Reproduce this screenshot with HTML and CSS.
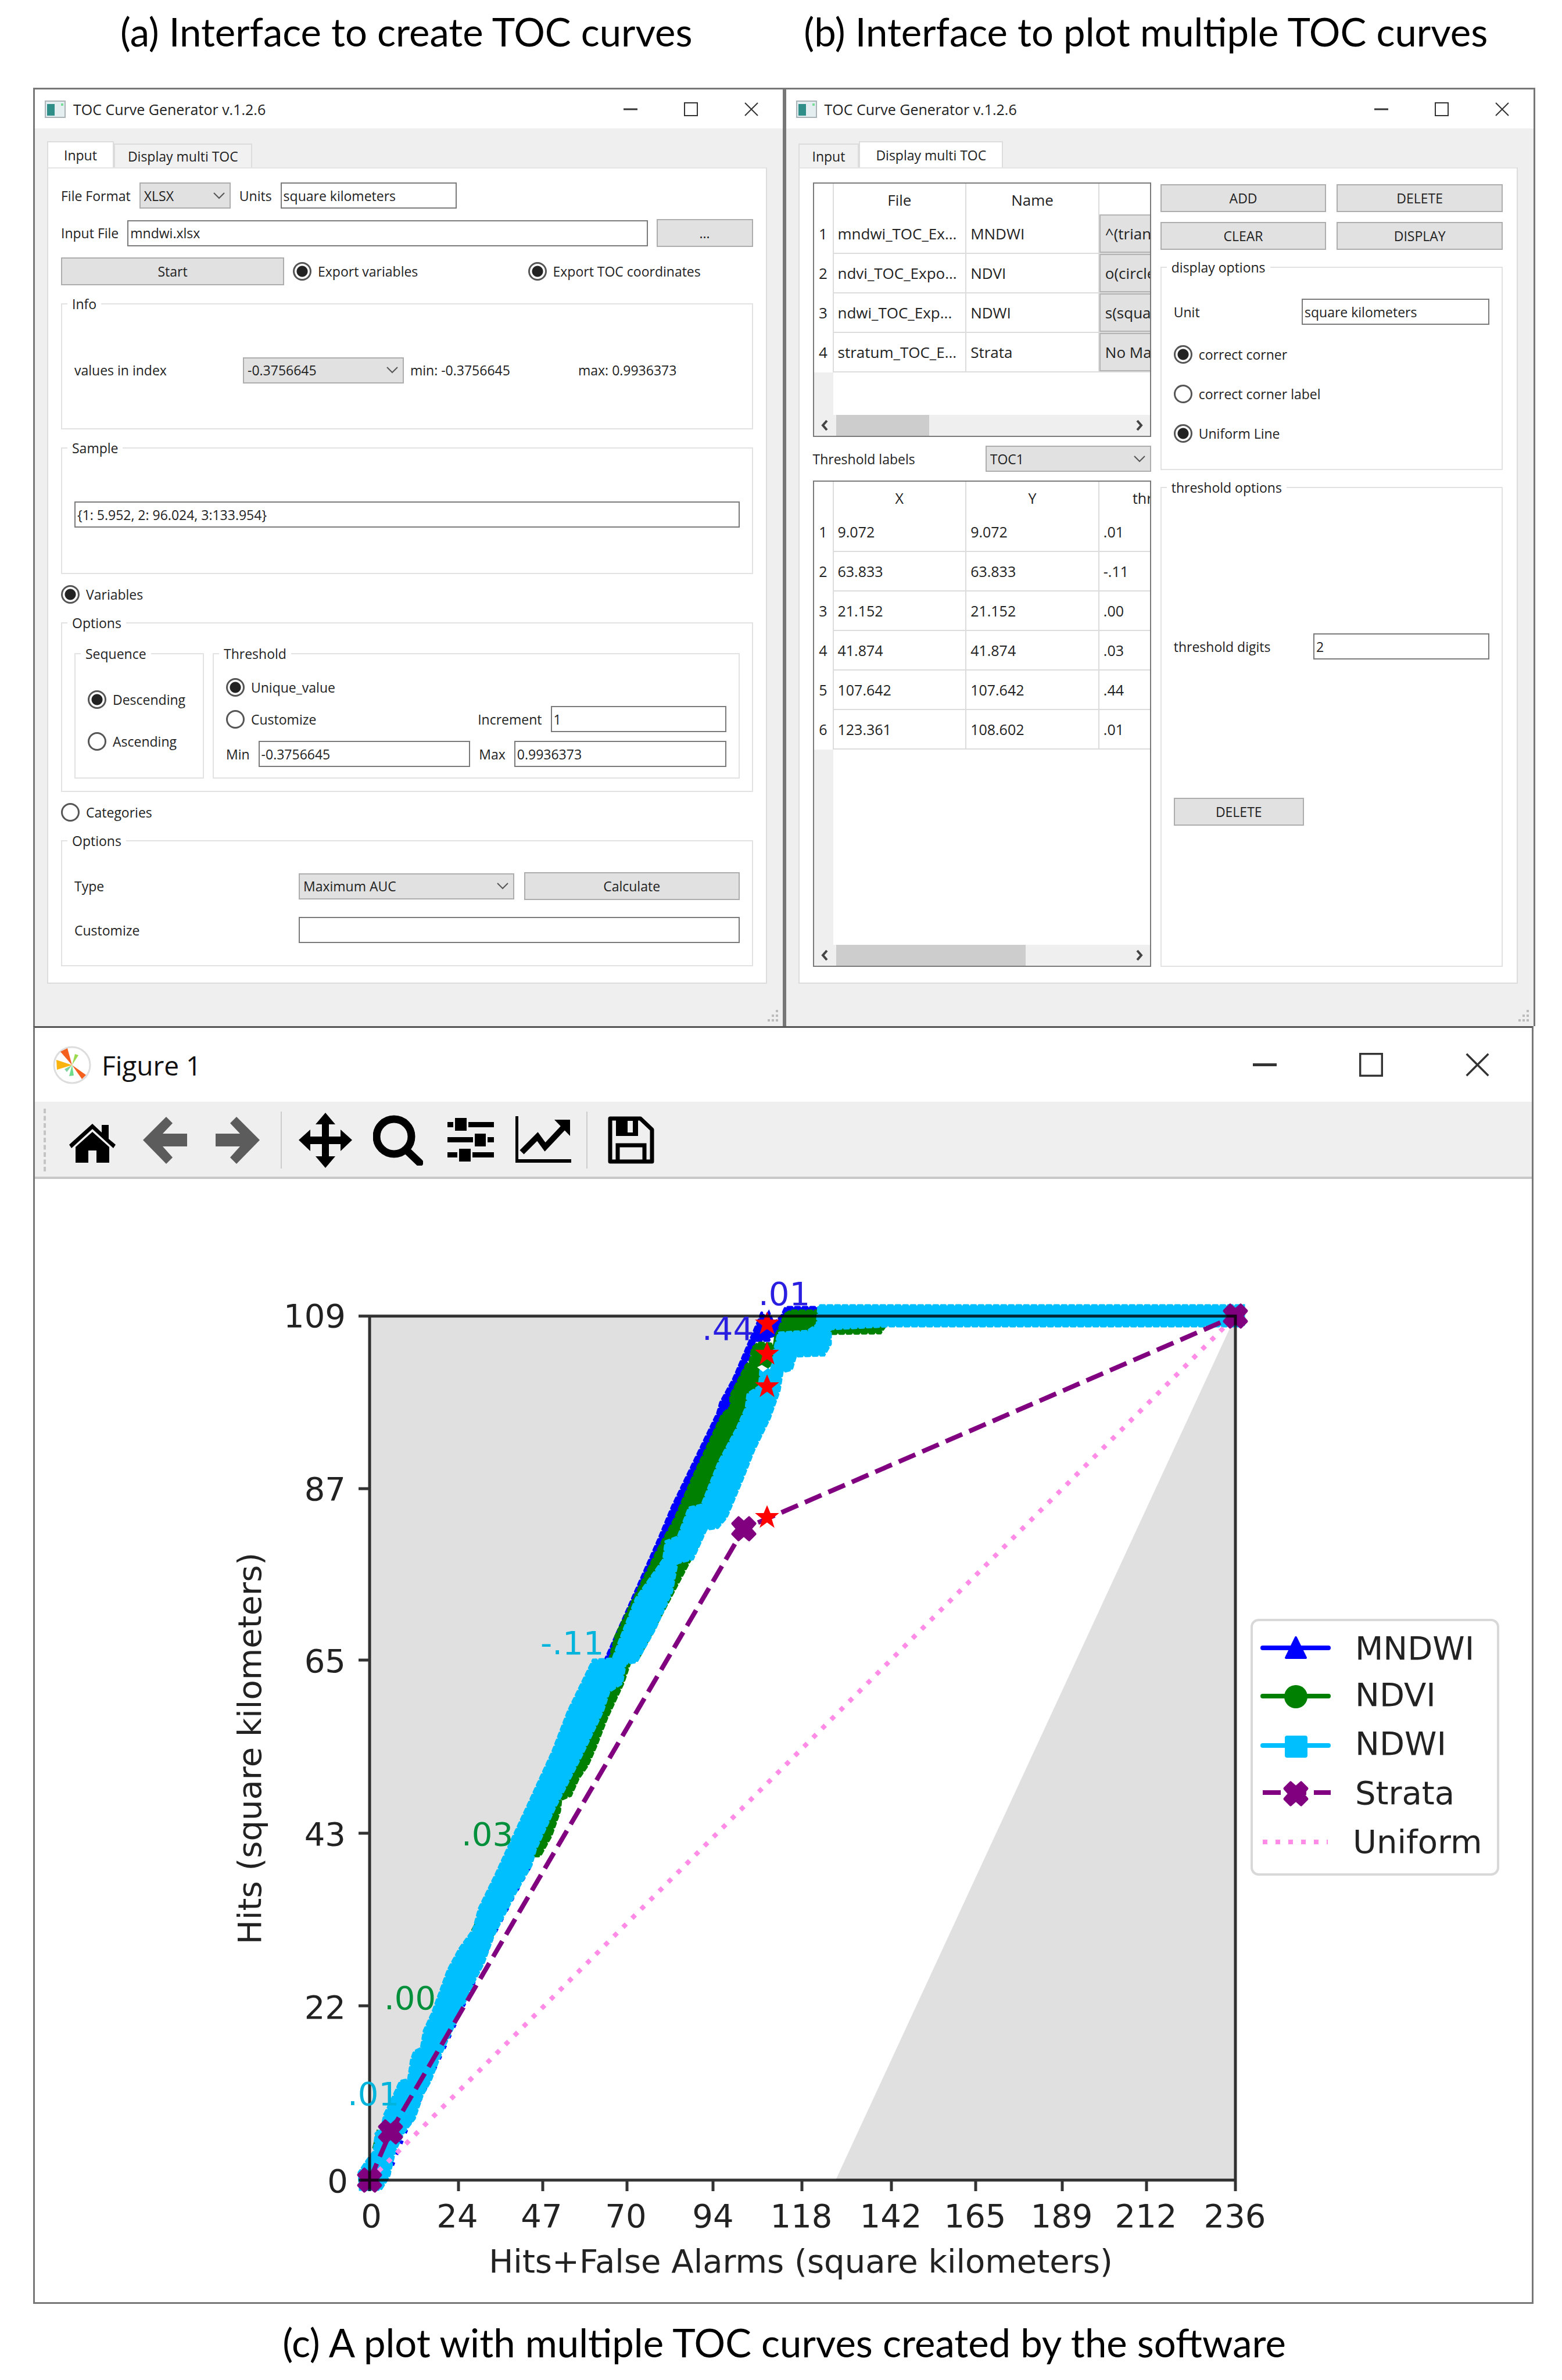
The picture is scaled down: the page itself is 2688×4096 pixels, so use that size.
FILE: index.html
```html
<!DOCTYPE html>
<html lang="en">
<head>
    <meta charset="UTF-8">
    <meta name="viewport" content="width=device-width, initial-scale=1.0">
    <title>TOC Curve Generator</title>
    <link rel="stylesheet" href="styles.css">
</head>
<body>
    <!-- shared icons -->
    <svg class="defs" width="0" height="0">
        <symbol id="app" viewBox="0 0 36 30"><rect x="1" y="1" width="34" height="28" fill="#e4eef0" stroke="#aab4b8" stroke-width="2"/><rect x="4" y="6" width="13" height="20" fill="#2f8f88"/><rect x="28" y="5" width="4" height="4" fill="#7d9"/></symbol>
        <symbol id="min" viewBox="0 0 24 24"><path d="M0 12H24" stroke="#333" stroke-width="3"/></symbol>
        <symbol id="max" viewBox="0 0 24 24"><rect x="1" y="1" width="22" height="22" fill="none" stroke="#333" stroke-width="2"/></symbol>
        <symbol id="close" viewBox="0 0 24 24"><path d="M1 1L23 23M23 1L1 23" stroke="#333" stroke-width="2"/></symbol>
        <symbol id="down" viewBox="0 0 20 12"><path d="M1 1L10 10L19 1" fill="none" stroke="#555" stroke-width="2"/></symbol>
        <symbol id="left" viewBox="0 0 12 20"><path d="M10 2L3 10L10 18" fill="none" stroke="#444" stroke-width="4"/></symbol>
        <symbol id="right" viewBox="0 0 12 20"><path d="M2 2L9 10L2 18" fill="none" stroke="#444" stroke-width="4"/></symbol>
        <symbol id="grip" viewBox="0 0 20 20"><path d="M14 0h4v4h-4zM14 8h4v4h-4zM14 16h4v4h-4zM7 8h4v4h-4zM7 16h4v4h-4zM0 16h4v4h-4z" fill="#bbb"/></symbol>
        <path id="cross" d="M-9 -19L0 -11L9 -19L19 -9L11 0L19 9L9 19L0 11L-9 19L-19 9L-11 0L-19 -9Z"/>
        <path id="star" d="M0 -18L5 -6L18 -6L7 3L11 16L0 8L-11 16L-7 3L-18 -6L-5 -6Z"/>
    </svg>

    <main class="page">
        <div class="windows">
            <h2 class="caption">(a) Interface to create TOC curves</h2>
            <h2 class="caption caption-b">(b) Interface to plot multiple TOC curves</h2>

            <section class="window">
                <header class="titlebar">
                    <svg class="app-icon"><use href="#app"/></svg>
                    <span class="title">TOC Curve Generator v.1.2.6</span>
                    <button class="win-btn" aria-label="Minimize"><svg><use href="#min"/></svg></button>
                    <button class="win-btn" aria-label="Maximize"><svg><use href="#max"/></svg></button>
                    <button class="win-btn" aria-label="Close"><svg><use href="#close"/></svg></button>
                </header>
                <nav class="tabs">
                    <button class="tab active">Input</button>
                    <button class="tab">Display multi TOC</button>
                </nav>
                <div class="panel form">
                    <div class="row">
                        <label for="format">File Format</label>
                        <span class="combo format"><select id="format"><option>XLSX</option></select><svg><use href="#down"/></svg></span>
                        <label for="units">Units</label>
                        <input class="text units" type="text" id="units" value="square kilometers">
                    </div>
                    <div class="row">
                        <label for="file">Input File</label>
                        <input class="text grow" type="text" id="file" value="mndwi.xlsx">
                        <button class="btn browse">...</button>
                    </div>
                    <div class="row export">
                        <button class="btn">Start</button>
                        <label class="radio"><input type="radio" name="exportVars" checked>Export variables</label>
                        <label class="radio"><input type="radio" name="exportToc" checked>Export TOC coordinates</label>
                    </div>
                    <fieldset class="group">
                        <legend>Info</legend>
                        <div class="info">
                            <label for="index">values in index</label>
                            <span class="combo"><select id="index"><option>-0.3756645</option></select><svg><use href="#down"/></svg></span>
                            <span>min: -0.3756645</span>
                            <span>max: 0.9936373</span>
                        </div>
                    </fieldset>
                    <fieldset class="group">
                        <legend>Sample</legend>
                        <div class="sample">
                            <input class="text grow" type="text" aria-label="Sample" value="{1: 5.952, 2: 96.024, 3:133.954}">
                        </div>
                    </fieldset>
                    <label class="radio"><input type="radio" name="kind" checked>Variables</label>
                    <fieldset class="group">
                        <legend>Options</legend>
                        <div class="options">
                            <fieldset class="group">
                                <legend>Sequence</legend>
                                <div class="sequence">
                                    <label class="radio"><input type="radio" name="seq" checked>Descending</label>
                                    <label class="radio"><input type="radio" name="seq">Ascending</label>
                                </div>
                            </fieldset>
                            <fieldset class="group">
                                <legend>Threshold</legend>
                                <div class="threshold">
                                    <label class="radio"><input type="radio" name="thr" checked>Unique_value</label>
                                    <div class="row">
                                        <label class="radio grow"><input type="radio" name="thr">Customize</label>
                                        <label for="inc">Increment</label>
                                        <input class="text increment" type="text" id="inc" value="1">
                                    </div>
                                    <div class="row">
                                        <label for="tmin">Min</label>
                                        <input class="text grow" type="text" id="tmin" value="-0.3756645">
                                        <label for="tmax">Max</label>
                                        <input class="text grow" type="text" id="tmax" value="0.9936373">
                                    </div>
                                </div>
                            </fieldset>
                        </div>
                    </fieldset>
                    <label class="radio"><input type="radio" name="kind">Categories</label>
                    <fieldset class="group">
                        <legend>Options</legend>
                        <div class="categories">
                            <label for="type">Type</label>
                            <span class="combo"><select id="type"><option>Maximum AUC</option></select><svg><use href="#down"/></svg></span>
                            <button class="btn">Calculate</button>
                            <label for="custom">Customize</label>
                            <input class="text wide" type="text" id="custom">
                        </div>
                    </fieldset>
                </div>
                <footer class="status"><svg><use href="#grip"/></svg></footer>
            </section>

            <section class="window">
                <header class="titlebar">
                    <svg class="app-icon"><use href="#app"/></svg>
                    <span class="title">TOC Curve Generator v.1.2.6</span>
                    <button class="win-btn" aria-label="Minimize"><svg><use href="#min"/></svg></button>
                    <button class="win-btn" aria-label="Maximize"><svg><use href="#max"/></svg></button>
                    <button class="win-btn" aria-label="Close"><svg><use href="#close"/></svg></button>
                </header>
                <nav class="tabs">
                    <button class="tab">Input</button>
                    <button class="tab active">Display multi TOC</button>
                </nav>
                <div class="panel display">
                    <div class="left">
                        <div class="sheet files">
                            <div class="view">
                                <table>
                                    <colgroup><col class="num"><col><col><col></colgroup>
                                    <thead><tr><th></th><th>File</th><th>Name</th><th></th></tr></thead>
                                    <tbody>
                                        <tr><th>1</th><td>mndwi_TOC_Ex...</td><td>MNDWI</td><td class="pick"><select aria-label="Marker 1"><option>^(triangle)</option></select></td></tr>
                                        <tr><th>2</th><td>ndvi_TOC_Expo...</td><td>NDVI</td><td class="pick"><select aria-label="Marker 2"><option>o(circle)</option></select></td></tr>
                                        <tr><th>3</th><td>ndwi_TOC_Exp...</td><td>NDWI</td><td class="pick"><select aria-label="Marker 3"><option>s(square)</option></select></td></tr>
                                        <tr><th>4</th><td>stratum_TOC_E...</td><td>Strata</td><td class="pick"><select aria-label="Marker 4"><option>No Marker</option></select></td></tr>
                                    </tbody>
                                </table>
                                <div class="gutter"></div>
                            </div>
                            <div class="scroll"><svg><use href="#left"/></svg><div class="track"><div class="thumb" style="width: 32%"></div></div><svg><use href="#right"/></svg></div>
                        </div>
                        <div class="row labels">
                            <label for="toc">Threshold labels</label>
                            <span class="combo toc"><select id="toc"><option>TOC1</option></select><svg><use href="#down"/></svg></span>
                        </div>
                        <div class="sheet grow">
                            <div class="view">
                                <table>
                                    <colgroup><col class="num"><col><col><col></colgroup>
                                    <thead><tr><th></th><th>X</th><th>Y</th><th>threshold</th></tr></thead>
                                    <tbody>
                                        <tr><th>1</th><td>9.072</td><td>9.072</td><td>.01</td></tr>
                                        <tr><th>2</th><td>63.833</td><td>63.833</td><td>-.11</td></tr>
                                        <tr><th>3</th><td>21.152</td><td>21.152</td><td>.00</td></tr>
                                        <tr><th>4</th><td>41.874</td><td>41.874</td><td>.03</td></tr>
                                        <tr><th>5</th><td>107.642</td><td>107.642</td><td>.44</td></tr>
                                        <tr><th>6</th><td>123.361</td><td>108.602</td><td>.01</td></tr>
                                    </tbody>
                                </table>
                                <div class="gutter"></div>
                            </div>
                            <div class="scroll"><svg><use href="#left"/></svg><div class="track"><div class="thumb" style="width: 65%"></div></div><svg><use href="#right"/></svg></div>
                        </div>
                    </div>
                    <div class="right">
                        <div class="actions">
                            <button class="btn">ADD</button>
                            <button class="btn">DELETE</button>
                            <button class="btn">CLEAR</button>
                            <button class="btn">DISPLAY</button>
                        </div>
                        <fieldset class="group">
                            <legend>display options</legend>
                            <div class="display-options">
                                <div class="row spread">
                                    <label for="unit">Unit</label>
                                    <input class="text unit" type="text" id="unit" value="square kilometers">
                                </div>
                                <label class="radio"><input type="radio" name="corner" checked>correct corner</label>
                                <label class="radio"><input type="radio" name="cornerLabel">correct corner label</label>
                                <label class="radio"><input type="radio" name="uniform" checked>Uniform Line</label>
                            </div>
                        </fieldset>
                        <fieldset class="group grow">
                            <legend>threshold options</legend>
                            <div class="threshold-options">
                                <div class="row spread">
                                    <label for="digits">threshold digits</label>
                                    <input class="text digits" type="text" id="digits" value="2">
                                </div>
                                <button class="btn remove">DELETE</button>
                            </div>
                        </fieldset>
                    </div>
                </div>
                <footer class="status"><svg><use href="#grip"/></svg></footer>
            </section>
        </div>

        <section class="figure">
            <header class="titlebar">
                <svg class="mpl" viewBox="0 0 66 66">
                    <circle cx="33" cy="33" r="31" fill="#fff" stroke="#ddd" stroke-width="3"/>
                    <path d="M33 33L13 10L25 4Z" fill="#f4601d"/>
                    <path d="M33 33L57 50L50 57Z" fill="#f4601d"/>
                    <path d="M33 33L6 24L7 41Z" fill="#fbb40f"/>
                    <path d="M33 33L38 14L44 16Z" fill="#9bd94e"/>
                    <path d="M33 33L28 52L36 51Z" fill="#6fdc8c"/>
                    <path d="M33 33L20 40L24 45Z" fill="#7fd4a0"/>
                </svg>
                <span class="title">Figure 1</span>
                <button class="win-btn" aria-label="Minimize"><svg><use href="#min"/></svg></button>
                <button class="win-btn" aria-label="Maximize"><svg><use href="#max"/></svg></button>
                <button class="win-btn" aria-label="Close"><svg><use href="#close"/></svg></button>
            </header>
            <div class="toolbar">
                <span class="handle"></span>
                <button class="home" aria-label="Home"><svg width="80" height="67" viewBox="0 0 80 67"><path d="M0 36L40 0L56 15V2H68V26L80 36L76 42L40 9L4 42Z"/><path d="M40 14L69 40V67H47V46H33V67H11V40Z"/></svg></button>
                <button class="off" aria-label="Back"><svg width="76" height="81" viewBox="0 0 76 81"><path d="M0 40L40 0L51 11L34 29H76V51H34L51 70L40 81Z"/></svg></button>
                <button class="off" aria-label="Forward"><svg width="76" height="81" viewBox="0 0 76 81"><path d="M76 40L36 0L25 11L42 29H0V51H42L25 70L36 81Z"/></svg></button>
                <span class="sep"></span>
                <button aria-label="Pan"><svg width="92" height="95" viewBox="0 0 92 95"><path d="M46 0L63 20H52V41H72V29L92 47L72 66V54H52V75H63L46 95L29 75H40V54H20V66L0 47L20 29V41H40V20H29Z"/></svg></button>
                <button aria-label="Zoom"><svg width="86" height="88" viewBox="0 0 86 88"><circle cx="36" cy="38" r="30" fill="none" stroke="#000" stroke-width="13"/><path d="M57 61L80 83" stroke="#000" stroke-width="13" stroke-linecap="round"/></svg></button>
                <button aria-label="Subplots"><svg width="80" height="76" viewBox="0 0 80 76"><path d="M0 7H10V16H0ZM13 0H33V22H13ZM36 7H80V16H36ZM0 33H44V42H0ZM47 27H66V49H47ZM69 33H80V42H69ZM0 59H17V68H0ZM20 53H40V75H20ZM43 59H80V68H43Z"/></svg></button>
                <button aria-label="Customize"><svg width="96" height="82" viewBox="0 0 96 82"><path d="M2 0V77H96" fill="none" stroke="#000" stroke-width="6"/><path d="M11 62L38 35L51 53L82 20" fill="none" stroke="#000" stroke-width="10"/><path d="M67 6H94V34Z"/></svg></button>
                <span class="sep"></span>
                <button aria-label="Save"><svg width="80" height="82" viewBox="0 0 80 82"><path d="M4 4H56L76 23V78H4Z" fill="none" stroke="#000" stroke-width="7" stroke-linejoin="round"/><path fill-rule="evenodd" d="M14 4H52V34H14ZM34 8V28H43V8Z"/><path d="M17 78V50H63V78" fill="none" stroke="#000" stroke-width="7"/></svg></button>
            </div>

            <svg class="plot" viewBox="61 2026 2576 1933" role="img" aria-label="TOC curves">
                <!-- unreachable area -->
                <path class="shade" d="M637 2262H1325L637 3749ZM2127 2262V3749H1439Z"/>

                <!-- MNDWI -->
                <path class="mndwi bumpy" d="M1042 2855L1135 2645L1158 2590L1236 2429L1241 2411L1263 2371L1306 2271L1312 2256L1318 2266L1324 2256L1332 2275L1346 2262L1353 2247H1407V2290H1341L1327 2304H1300L1250 2440L1070 2853Z"/>
                <path class="fringe" d="M668 3742L696 3670L726 3604L756 3540L814 3412L847 3332L885 3258L915 3204"/>
                <!-- NDVI -->
                <path class="ndvi bumpy" d="M1050 2853L1061 2812L1134 2663L1162 2612L1193 2541L1244 2432L1259 2418L1258 2400L1285 2347L1292 2340L1296 2317L1306 2308L1328 2310L1341 2286L1352 2259L1362 2253H1407L1527 2275L1516 2291L1430 2292L1380 2300L1310 2360L1300 2400L1200 2660L1100 2850Z"/>
                <path class="ndvi bumpy" d="M1060 2850L1085 2858L1073 2894L1045 2954L1026 3003L1012 3035L996 3058L983 3087L966 3094L964 3114L949 3157L930 3191L922 3191L880 3174Z"/>
                <path class="ndvi" d="M812 3319L824 3296V3320ZM727 3520L742 3480V3520ZM642 3694L650 3662L660 3690ZM846 3338L858 3312L840 3320Z"/>
                <!-- NDWI -->
                <path class="ndwi bumpy" d="M621 3765L619 3736L633 3715L645 3700L648 3669L658 3660L663 3636L673 3616L690 3579L704 3576L709 3542L714 3528L726 3522L731 3492L745 3462L772 3388L792 3351L816 3318L826 3281L854 3224L877 3174L905 3114L952 3012L979 2942L1022 2854L1056 2852L1065 2827L1096 2748L1143 2681L1147 2650L1168 2642L1187 2592L1209 2587L1238 2514L1269 2456L1285 2420L1288 2396L1308 2383L1310 2356L1329 2353L1333 2323L1341 2291L1391 2288L1407 2277L1410 2244H2141V2279H1530L1430 2284V2310L1419 2329L1370 2331L1363 2354L1347 2358L1342 2390L1325 2438L1298 2493L1279 2541L1251 2608L1236 2626L1216 2629L1193 2680L1166 2687L1157 2736L1127 2802L1096 2857L1077 2860L1071 2894L1049 2908L1038 2942L1003 3015L972 3076L956 3107L922 3181L915 3207L888 3254L850 3328L833 3375L816 3408L779 3489L758 3535L741 3579L728 3602L714 3643L694 3669L680 3700L670 3743L656 3765Z"/>
                <path fill="#fff" d="M1304 2350L1312 2346L1322 2352L1314 2358ZM1326 2300L1333 2298L1331 2312Z"/>

                <!-- Strata and Uniform -->
                <path class="strata" d="M637 3749L673 3666L1281 2628L2127 2262"/>
                <path class="uniform" d="M637 3749L2127 2262"/>
                <g class="cross">
                    <use href="#cross" x="637" y="3749"/>
                    <use href="#cross" x="673" y="3666"/>
                    <use href="#cross" x="1281" y="2628"/>
                    <use href="#cross" x="2127" y="2262"/>
                </g>
                <g class="star">
                    <use href="#star" x="1321" y="2275"/>
                    <use href="#star" x="1321" y="2327"/>
                    <use href="#star" x="1321" y="2383"/>
                    <use href="#star" x="1321" y="2608"/>
                </g>

                <!-- axes -->
                <path class="axis" d="M637 2262H2127V3749H637ZM618 2262H637M618 2559H637M618 2854H637M618 3152H637M618 3449H637M618 3749H637M637 3749V3768M790 3749V3768M935 3749V3768M1080 3749V3768M1228 3749V3768M1381 3749V3768M1535 3749V3768M1680 3749V3768M1829 3749V3768M1974 3749V3768M2127 3749V3768"/>
                <g class="tick-y">
                    <text x="596" y="2281">109</text>
                    <text x="596" y="2579">87</text>
                    <text x="596" y="2875">65</text>
                    <text x="596" y="3173">43</text>
                    <text x="596" y="3471">22</text>
                    <text x="600" y="3770">0</text>
                </g>
                <g class="tick-x">
                    <text x="640" y="3830">0</text>
                    <text x="788" y="3830">24</text>
                    <text x="933" y="3830">47</text>
                    <text x="1078" y="3830">70</text>
                    <text x="1228" y="3830">94</text>
                    <text x="1380" y="3830">118</text>
                    <text x="1534" y="3830">142</text>
                    <text x="1679" y="3830">165</text>
                    <text x="1828" y="3830">189</text>
                    <text x="1973" y="3830">212</text>
                    <text x="2126" y="3830">236</text>
                    <text x="1379" y="3908">Hits+False Alarms (square kilometers)</text>
                    <text transform="translate(450 3006) rotate(-90)">Hits (square kilometers)</text>
                </g>
                <text class="blue" x="1306" y="2243">.01</text>
                <text class="blue" x="1209" y="2303">.44</text>
                <text class="cyan" x="931" y="2844">-.11</text>
                <text class="green" x="795" y="3173">.03</text>
                <text class="green" x="662" y="3455">.00</text>
                <text class="cyan" x="599" y="3620">.01</text>

                <!-- legend -->
                <rect class="legend" x="2155" y="2785" width="424" height="438" rx="12"/>
                <path class="key" stroke="#0000ff" d="M2174 2833H2287"/>
                <path fill="#0000ff" stroke="#0000ff" stroke-width="4" stroke-linejoin="round" d="M2231 2815L2248 2850H2214Z"/>
                <path class="key" stroke="#008000" d="M2174 2916H2287"/>
                <circle cx="2231" cy="2917" r="20" fill="#008000"/>
                <path class="key" stroke="#00bfff" d="M2174 3001H2287"/>
                <rect x="2212" y="2984" width="39" height="38" rx="4" fill="#00bfff"/>
                <path class="strata" d="M2174 3082H2291"/>
                <use class="cross" href="#cross" x="2231" y="3084"/>
                <path class="uniform" d="M2174 3167H2286"/>
                <text x="2333" y="2853">MNDWI</text>
                <text x="2333" y="2933">NDVI</text>
                <text x="2333" y="3017">NDWI</text>
                <text x="2333" y="3102">Strata</text>
                <text x="2329" y="3186">Uniform</text>
            </svg>
        </section>
        <h2 class="caption caption-c">(c) A plot with multiple TOC curves created by the software</h2>
    </main>
</body>
</html>
```

FILE: styles.css
```css
* {
    box-sizing: border-box;
}

body {
    margin: 0;
    background: #fff;
    color: #222;
    font-family: "Open Sans", "Noto Sans", sans-serif;
    font-size: 23px;
    line-height: 32px;
}

button, input, select {
    margin: 0;
    font: inherit;
    color: inherit;
}

.defs {
    position: absolute;
}

.page {
    padding: 0 46px 0 57px;
}

.caption {
    margin: 0;
    padding: 16px 8px 59px 0;
    color: #000;
    font-family: Lato, sans-serif;
    font-size: 67px;
    font-weight: 400;
    line-height: 76px;
    text-align: center;
    white-space: nowrap;
}
.caption-b {
    padding-right: 48px;
}
.caption-c {
    padding: 28px 0 32px;
}

.windows {
    display: grid;
    grid-template-columns: 1fr 1fr;
}

.window {
    display: flex;
    flex-direction: column;
    min-width: 0;
    border: 3px solid #777;
    border-bottom: 0;
    background: #efefef;
}

/* title bars */
.titlebar {
    display: flex;
    align-items: center;
    gap: 80px;
    height: 67px;
    padding: 0 42px 0 17px;
    background: #fff;
}
.app-icon {
    width: 36px;
    height: 30px;
    margin-right: -67px;
}
.title {
    flex: 1;
    font-size: 25px;
    white-space: nowrap;
}
.win-btn {
    padding: 0;
    border: 0;
    background: none;
}
.win-btn svg {
    display: block;
    width: 24px;
    height: 24px;
}

/* tabs */
.tabs {
    display: flex;
    align-items: flex-end;
    height: 67px;
    padding-left: 21px;
}
.tab {
    height: 41px;
    padding: 0 22px;
    border: 2px solid #dcdcdc;
    border-bottom: 0;
    background: #f1f1f1;
}
.tab.active {
    height: 45px;
    padding: 0 27px;
    background: #fff;
}
.panel {
    flex: 1;
    margin: 0 27px 0 21px;
    border: 2px solid #dcdcdc;
    border-top-color: #e4e4e4;
    background: #fff;
}
.status {
    display: flex;
    align-items: flex-end;
    justify-content: flex-end;
    height: 73px;
    padding: 0 6px 8px;
}
.status svg {
    width: 20px;
    height: 20px;
}

/* controls */
.row {
    display: flex;
    align-items: center;
    gap: 15px;
}
.spread {
    justify-content: space-between;
}
.grow {
    flex: 1;
    min-width: 0;
}
.text {
    height: 45px;
    min-width: 0;
    padding: 0 3px;
    border: 2px solid #7a7a7a;
    background: #fff;
}
.btn {
    height: 48px;
    padding: 0;
    border: 2px solid #adadad;
    background: #e1e1e1;
}
.combo {
    display: grid;
    align-items: center;
}
.combo select, .combo svg {
    grid-area: 1 / 1;
}
.combo select, .pick select {
    appearance: none;
    width: 100%;
    height: 45px;
    padding: 0 6px;
    border: 2px solid #adadad;
    border-radius: 0;
    background: #e1e1e1;
}
.combo svg {
    justify-self: end;
    width: 20px;
    height: 12px;
    margin-right: 10px;
    pointer-events: none;
}
.radio {
    display: flex;
    align-items: center;
    gap: 11px;
    height: 34px;
}
.radio input {
    appearance: none;
    width: 32px;
    height: 32px;
    border: 3px solid #555;
    border-radius: 50%;
    background: #fff;
}
.radio input:checked {
    background: radial-gradient(circle, #222 9px, #fff 10px);
}
.group {
    min-width: 0;
    margin: 0;
    padding: 0 21px;
    border: 2px solid #e2e2e2;
}
.group legend {
    margin-left: -12px;
    padding: 0 8px;
    line-height: 28px;
}

/* input tab */
.form {
    display: flex;
    flex-direction: column;
    gap: 18px;
    padding: 24px 22px 28px;
}
.format {
    width: 157px;
}
.units {
    width: 303px;
}
.browse {
    width: 166px;
}
.export {
    display: grid;
    grid-template-columns: 384px 1fr 387px;
}
.info {
    display: grid;
    grid-template-columns: 279px 277px 278px 1fr;
    column-gap: 11px;
    align-items: center;
    height: 200px;
}
.sample {
    display: flex;
    align-items: center;
    height: 201px;
}
.options {
    display: grid;
    grid-template-columns: 223px 1fr;
    gap: 15px;
    padding: 25px 0 21px;
}
.sequence {
    display: flex;
    flex-direction: column;
    gap: 38px;
    height: 199px;
    padding-top: 48px;
}
.threshold {
    display: flex;
    flex-direction: column;
    gap: 15px;
    height: 199px;
    padding-top: 27px;
}
.increment {
    width: 302px;
}
.categories {
    display: grid;
    grid-template-columns: 369px 1fr 1fr;
    gap: 29px 17px;
    align-items: center;
    height: 200px;
    padding: 40px 0;
}
.wide {
    grid-column: span 2;
}

/* display tab */
.display {
    display: grid;
    grid-template-columns: 584fr 591fr;
    gap: 16px;
    padding: 24px 24px 27px 23px;
}
.left, .right {
    display: flex;
    flex-direction: column;
    min-width: 0;
    gap: 16px;
}
.sheet {
    display: flex;
    flex-direction: column;
    border: 2px solid #7a7a7a;
    background: #fff;
}
.files {
    height: 438px;
}
.view {
    display: flex;
    flex-direction: column;
    flex: 1;
    overflow: hidden;
}
.view table {
    width: 720px;
    table-layout: fixed;
    border-collapse: collapse;
    font-size: 25px;
}
.files table {
    font-size: 26px;
}
.view .num {
    width: 33px;
}
.view th, .view td {
    height: 68px;
    padding: 0 7px;
    border-right: 2px solid #dcdcdc;
    border-bottom: 2px solid #dcdcdc;
    font-weight: 400;
    text-align: left;
    white-space: nowrap;
}
.view th {
    padding: 0;
    border-bottom: 0;
    text-align: center;
}
.view thead th {
    height: 52px;
    padding-top: 4px;
}
.view .pick {
    padding: 0;
}
.pick select {
    display: block;
    height: 66px;
    padding: 0 8px;
    border-color: #b4b4b4;
}
.gutter {
    flex: 1;
    width: 33px;
    background: #efefef;
}
.scroll {
    display: flex;
    align-items: center;
    height: 36px;
    padding: 0 12px;
    background: #efefef;
}
.scroll svg {
    width: 12px;
    height: 20px;
}
.track {
    flex: 1;
    padding: 0 14px;
}
.thumb {
    height: 36px;
    background: #cdcdcd;
}
.labels {
    justify-content: space-between;
    height: 43px;
}
.toc {
    width: 285px;
}
.actions {
    display: grid;
    grid-template-columns: 1fr 1fr;
    gap: 17px 18px;
    padding-top: 3px;
}
.display-options {
    display: flex;
    flex-direction: column;
    gap: 34px;
    padding: 40px 0 44px;
}
.unit {
    width: 323px;
}
.digits {
    width: 303px;
}
.threshold-options {
    display: flex;
    flex-direction: column;
    justify-content: space-evenly;
    height: 805px;
}
.remove {
    width: 224px;
}

/* figure window */
.figure {
    margin-right: 3px;
    border: 3px solid #777;
    border-top-color: #555;
}
.figure .titlebar {
    gap: 142px;
    height: 127px;
    padding: 0 73px 0 31px;
}
.mpl {
    width: 66px;
    height: 66px;
    margin-right: -124px;
}
.figure .title {
    color: #111;
    font-size: 46px;
}
.figure .win-btn svg {
    width: 41px;
    height: 41px;
}
.toolbar {
    display: flex;
    align-items: center;
    height: 133px;
    padding-top: 3px;
    border-bottom: 4px solid #c8c8c8;
    background: #efefef;
}
.toolbar button {
    display: flex;
    justify-content: center;
    width: 125px;
    padding: 0;
    border: 0;
    background: none;
}
.toolbar .home {
    padding-top: 10px;
}
.toolbar .off {
    fill: #5c5c5c;
}
.handle {
    height: 108px;
    margin: 0 17px 0 15px;
    border-left: 4px dashed #c4c4c4;
}
.sep {
    width: 2px;
    height: 98px;
    margin: 0 12px;
    background: #ccc;
}

/* plot */
.plot {
    display: block;
    width: 100%;
    font-family: "DejaVu Sans", sans-serif;
    font-size: 56px;
}
.plot text {
    fill: #222;
}
.shade {
    fill: #e0e0e0;
}
.bumpy {
    stroke-width: 5px;
    stroke-dasharray: 7px 6px;
    stroke-linecap: round;
}
.mndwi {
    fill: #0000ff;
    stroke: #0000ff;
}
.ndvi {
    fill: #008000;
    stroke: #008000;
}
.ndwi {
    fill: #00bfff;
    stroke: #00bfff;
}
.fringe {
    fill: none;
    stroke: #0000ff;
    stroke-width: 8px;
    stroke-dasharray: 6px 14px;
}
.strata {
    fill: none;
    stroke: #800080;
    stroke-width: 8px;
    stroke-dasharray: 31px 13px;
}
.uniform {
    fill: none;
    stroke: #ff8ce6;
    stroke-width: 8px;
    stroke-dasharray: 8px 14px;
}
.cross {
    fill: #800080;
    stroke: #800080;
    stroke-width: 5px;
    stroke-linejoin: round;
}
.star {
    fill: #ff0000;
    stroke: #ff0000;
    stroke-width: 2px;
}
.axis {
    fill: none;
    stroke: #000;
    stroke-opacity: 0.8;
    stroke-width: 5px;
}
.tick-y {
    text-anchor: end;
}
.tick-x {
    text-anchor: middle;
}
.plot .blue {
    fill: #2a1fe0;
}
.plot .cyan {
    fill: #00b4dc;
}
.plot .green {
    fill: #008f3a;
}
.legend {
    fill: #fff;
    stroke: #d8d8d8;
    stroke-width: 4px;
}
.key {
    stroke-width: 8px;
    stroke-linecap: round;
}
```
